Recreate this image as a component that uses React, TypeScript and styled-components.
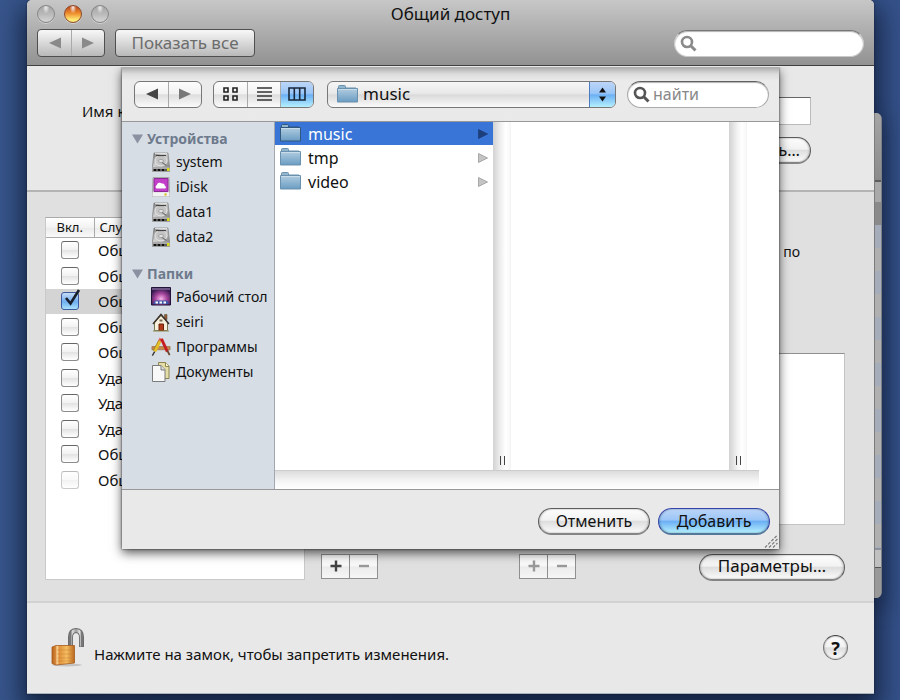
import React, { useState } from "react";
import styled, { createGlobalStyle, css } from "styled-components";

const Global = createGlobalStyle`
  * { box-sizing: border-box; }
  html, body, #root { height: 100%; }
  body {
    margin: 0;
    overflow: hidden;
    font-family: "Noto Sans", "Open Sans", sans-serif;
    font-size: 15px;
    line-height: 20px;
    color: #111;
  }
  button, input, select { font: inherit; color: inherit; margin: 0; }
  button:focus, input:focus, select:focus { outline: none; }
`;

const gloss = "linear-gradient(#fdfdfd 0%, #f2f2f2 46%, #dedede 52%, #fbfbfb 100%)";
const aqua = "linear-gradient(#bcd5f7 0%, #9bc6f7 45%, #6cb0f5 52%, #b5f0fd 100%)";

const Desktop = styled.div`
  position: relative;
  height: 100%;
  padding: 0 26px 6px 27px;
  display: flex;
  background: linear-gradient(90deg, #38568c, #2d487a 50%, #35528a);
`;

const BackWindow = styled.div`
  position: absolute;
  z-index: 1;
  right: 18px;
  top: 113px;
  width: 8px;
  height: 485px;
  display: flex;
  flex-direction: column;
  border-radius: 0 6px 6px 0;
  background: #9d9d9d;
  border-left: 1px solid #7c7c7c;
  border-right: 1px solid #7d8086;
  box-shadow: 0 8px 20px 2px rgba(5, 12, 30, 0.5);
  clip-path: inset(-20px -40px -40px 0);
`;
const BackTitle = styled.div`
  height: 69px;
  border-radius: 0 5px 0 0;
  background: linear-gradient(#a5a5a5, #8b8b8b);
  border-bottom: 2px solid #5d5d5d;
`;
const BackHeader = styled.div`
  height: 43px;
  background: linear-gradient(#a9a9a9 0 20px, #8a8a8a 20px);
`;
const BackRows = styled.div`
  flex: 1;
  background: repeating-linear-gradient(#a4adb9 0 23px, #b0b0b0 23px 46px);
`;
const BackFoot = styled.div`
  height: 50px;
  border-radius: 0 0 5px 0;
  border-top: 2px solid #8d929c;
  background: linear-gradient(#c0c0c0 0 17px, #555 17px 18px, #999 18px);
`;

const Window = styled.main`
  position: relative;
  flex: 1;
  display: flex;
  flex-direction: column;
  background: #e8e8e8;
  border-bottom: 1px solid #aab2c0;
  border-radius: 5px 5px 0 0;
  box-shadow: 0 12px 26px 6px rgba(5, 12, 30, 0.65), 0 0 2px #223;
`;

const TitleArea = styled.header`
  height: 67px;
  padding: 3px 10px 0;
  border-bottom: 1px solid #404040;
  border-radius: 5px 5px 0 0;
  background: linear-gradient(#c7c7c7, #929292);
`;
const TitleRow = styled.div`
  display: grid;
  grid-template-columns: 1fr auto 1fr;
  align-items: center;
  height: 21px;
`;
const Title = styled.h1`
  margin: 0;
  font-size: 17px;
  font-weight: 400;
  line-height: 21px;
`;
const Lights = styled.div`
  display: flex;
  gap: 9px;
`;
const Light = styled.button<{ $lit?: boolean }>`
  width: 18px;
  height: 18px;
  padding: 0;
  border-radius: 50%;
  border: 1px solid ${(p) => (p.$lit ? "#8d4a2c" : "#858585")};
  background: ${(p) =>
    p.$lit
      ? "radial-gradient(ellipse at 50% 10%, rgba(255,255,255,0.9), transparent 30%), linear-gradient(#b8431c, #ee8b2b 45%, #ffe873 85%)"
      : "radial-gradient(ellipse at 50% 10%, rgba(255,255,255,0.8), transparent 30%), linear-gradient(#a5a5a5, #b9b9b9 50%, #d6d6d6)"};
  box-shadow: 0 1px 0 rgba(255, 255, 255, 0.4);
`;
const ToolRow = styled.div`
  display: flex;
  align-items: center;
  margin-top: 5px;
  gap: 10px;
`;
const Segments = styled.div<{ $dark?: boolean }>`
  display: flex;
  height: ${(p) => (p.$dark ? 28 : 27)}px;
  flex: none;
  border: 1px solid ${(p) => (p.$dark ? "#4f4f4f" : "#777")};
  border-radius: ${(p) => (p.$dark ? 4 : 6)}px;
  overflow: hidden;
  background: ${(p) => (p.$dark ? "linear-gradient(#f8f8f8, #b9b9b9)" : gloss)};
`;
const Segment = styled.button<{ $on?: boolean; $dark?: boolean }>`
  width: 33px;
  padding: 0;
  display: flex;
  align-items: center;
  justify-content: center;
  border: 0;
  background: ${(p) => (p.$on ? aqua : "transparent")};
  & + & { border-left: 1px solid ${(p) => (p.$dark ? "#333" : "#aaa")}; }
`;
const ShowAll = styled.button`
  height: 28px;
  width: 140px;
  padding: 0;
  border: 1px solid #4f4f4f;
  border-radius: 4px;
  background: linear-gradient(#f8f8f8, #b9b9b9);
  color: #6c6c6c;
  font-size: 17px;
  line-height: 24px;
`;
const SearchBox = styled.label<{ $sheet?: boolean }>`
  display: flex;
  align-items: center;
  flex: none;
  gap: 2px;
  width: ${(p) => (p.$sheet ? 142 : 190)}px;
  height: 27px;
  padding: 0 10px 0 5px;
  border-radius: 14px;
  background: #fff;
  border: 1px solid ${(p) => (p.$sheet ? "#aaa" : "#c9c9c9")};
  border-top-color: ${(p) => (p.$sheet ? "#606060" : "#777")};
  box-shadow: inset 0 1px 1px rgba(0, 0, 0, 0.3);
  margin-left: ${(p) => (p.$sheet ? "0" : "auto")};
  input {
    flex: 1;
    min-width: 0;
    padding: 0;
    border: 0;
    background: transparent;
    font-size: 16px;
    line-height: 20px;
  }
  input::placeholder { color: #888; opacity: 1; }
`;

const NameSection = styled.section`
  height: 126px;
  padding: 31px 63px 0 55px;
  border-bottom: 2px solid #b4b4b4;
`;
const NameLine = styled.div`
  display: flex;
  gap: 8px;
  align-items: center;
  line-height: 22px;
  input {
    flex: 1;
    height: 28px;
    border: 1px solid #bbb;
    border-top-color: #666;
    background: #fff;
  }
`;
const NameActions = styled.div`
  display: flex;
  justify-content: flex-end;
  margin-top: 12px;
`;
const Pill = styled.button<{ $primary?: boolean; $wide?: boolean }>`
  height: 27px;
  width: ${(p) => (p.$wide ? 146 : 112)}px;
  padding: 0 0 1px;
  border: 1px solid #5c5c5c;
  border-bottom: 2px solid #858585;
  border-radius: 14px;
  background: ${gloss};
  box-shadow: inset 1px 0 2px rgba(0, 0, 0, 0.2), inset -1px 0 2px rgba(0, 0, 0, 0.2);
  font-size: ${(p) => (p.$wide ? 17 : 16)}px;
  line-height: 22px;
  white-space: nowrap;
  ${(p) =>
    p.$primary &&
    css`
      border-color: #3445a8;
      border-bottom-color: #55779c;
      background: ${aqua};
    `}
`;

const Services = styled.section`
  flex: 1;
  display: flex;
  gap: 16px;
  padding: 25px 29px 20px 18px;
  background: #e0e0e0;
`;
const ServiceBox = styled.div`
  width: 260px;
  height: 363px;
  flex: none;
  background: #fff;
  border: 1px solid #c9c9c9;
  border-top-color: #aaa;
`;
const ServiceTable = styled.table`
  width: 100%;
  border-collapse: collapse;
  table-layout: fixed;
  th {
    height: 20px;
    padding: 0 0 0 5px;
    font-size: 13px;
    line-height: 18px;
    font-weight: 400;
    text-align: left;
    background: linear-gradient(#fff, #f2f2f2 50%, #eaeaea 52%, #fafafa);
    border-bottom: 1px solid #aaa;
  }
  th:first-child {
    width: 48px;
    padding: 0;
    text-align: center;
    border-right: 1px solid #aaa;
  }
  td { padding: 0 0 0 4px; white-space: nowrap; overflow: hidden; }
  td:first-child { padding: 0 0 0 15px; }
`;
const ServiceRow = styled.tr<{ $selected?: boolean }>`
  height: 25px;
  &:nth-child(even) { height: 26px; }
  background: ${(p) => (p.$selected ? "#d4d4d4" : "#fff")};
`;
const Check = styled.input`
  appearance: none;
  display: block;
  width: 18px;
  height: 18px;
  border: 1px solid #8c8c8c;
  border-top-color: #666;
  border-radius: 3px;
  background: linear-gradient(#fff, #f2f2f2 48%, #e3e3e3 52%, #fff);
  &:checked {
    border-color: #3a5a9c;
    background: linear-gradient(#c7dcf5, #6eaef0 55%, #a9e2fb);
  }
  &:disabled { opacity: 0.45; }
`;
const CheckWrap = styled.label`
  position: relative;
  display: block;
  svg { position: absolute; left: 2px; top: -4px; pointer-events: none; }
`;

const Detail = styled.div`
  flex: 1;
  min-width: 0;
  display: flex;
  flex-direction: column;
`;
const Hint = styled.p`
  margin: 25px 45px 91px 0;
  text-align: right;
  font-size: 14px;
  line-height: 20px;
`;
const Lists = styled.div`
  display: grid;
  grid-template-columns: 182px 1fr;
  gap: 16px;
`;
const ListBox = styled.div`
  height: 172px;
  background: #fff;
  border: 1px solid #c4c4c4;
  border-top-color: #909090;
`;
const DetailActions = styled.div`
  display: grid;
  grid-template-columns: 182px 1fr auto;
  column-gap: 16px;
  margin-top: 29px;
`;
const PlusMinus = styled.div`
  display: flex;
  button {
    width: 29px;
    height: 25px;
    padding: 0;
    display: flex;
    align-items: center;
    justify-content: center;
    border: 1px solid #909090;
    background: linear-gradient(#fff, #f7f7f7 48%, #ececec 52%, #f6f6f6);
  }
  button + button { margin-left: -1px; }
`;

const Footer = styled.footer`
  display: flex;
  align-items: center;
  height: 93px;
  padding: 0 26px 0 24px;
  border-top: 2px solid #d2d2d2;
`;
const LockButton = styled.button`
  padding: 0;
  border: 0;
  background: none;
  width: 34px;
  height: 42px;
`;
const LockText = styled.span`
  flex: 1;
  margin: 13px 0 0 9px;
`;
const Help = styled.button`
  width: 25px;
  height: 25px;
  padding: 0;
  border-radius: 50%;
  border: 1px solid #777;
  border-top-color: #444;
  background: ${gloss};
  box-shadow: inset 0 0 2px rgba(0, 0, 0, 0.5);
  font-size: 18px;
  line-height: 20px;
  font-weight: 700;
`;

const Sheet = styled.section`
  position: absolute;
  top: 67px;
  left: 95px;
  right: 95px;
  display: flex;
  flex-direction: column;
  background: #e9e9e9;
  box-shadow: 0 4px 10px rgba(0, 0, 0, 0.65), 0 0 2px rgba(0, 0, 0, 0.7);
  clip-path: inset(0 -20px -30px -20px);
`;
const SheetBar = styled.div`
  display: flex;
  align-items: center;
  height: 55px;
  padding: 0 10px 0 12px;
  gap: 11px;
  border-bottom: 1px solid #989898;
  background: linear-gradient(#a9a9a9, #dcdcdc 7px, #ebebeb 14px, #e9e9e9);
`;
const PathPicker = styled.div`
  flex: 1;
  min-width: 0;
  height: 27px;
  margin-left: 2px;
  display: flex;
  align-items: center;
  padding-left: 9px;
  border: 1px solid #777;
  border-radius: 6px;
  overflow: hidden;
  background: linear-gradient(#f6f6f6, #e9e9e9 45%, #dadada 52%, #fafafa);
  select {
    flex: 1;
    min-width: 0;
    height: 25px;
    padding: 0 5px;
    border: 0;
    appearance: none;
    background: transparent;
    font-size: 17px;
    line-height: 22px;
  }
`;
const Stepper = styled.span`
  width: 26px;
  height: 25px;
  display: flex;
  align-items: center;
  justify-content: center;
  background: ${aqua};
  border-left: 1px solid #4c7cc0;
`;
const Browser = styled.div`
  display: flex;
  height: 368px;
  border-bottom: 1px solid #989898;
`;
const Sidebar = styled.nav`
  width: 153px;
  flex: none;
  padding-top: 7px;
  background: #d6dde5;
  border-right: 1px solid #a3a8ae;
`;
const Group = styled.div`
  & + & { margin-top: 15px; }
`;
const GroupTitle = styled.h2`
  display: flex;
  align-items: center;
  gap: 4px;
  margin: 0;
  height: 20px;
  padding-left: 10px;
  font-size: 14px;
  line-height: 20px;
  font-weight: 700;
  color: #6d7a8c;
`;
const Place = styled.a`
  display: flex;
  align-items: center;
  gap: 5px;
  height: 25px;
  padding-left: 29px;
  font-size: 14px;
  line-height: 20px;
  white-space: nowrap;
  color: #111;
  text-decoration: none;
  svg { flex: none; }
`;
const ColumnArea = styled.div`
  flex: 1;
  min-width: 0;
  display: flex;
  flex-direction: column;
  background: #fff;
`;
const Columns = styled.div`
  flex: 1;
  display: flex;
  min-height: 0;
`;
const Column = styled.div`
  flex: 0 1 218px;
  min-width: 0;
`;
const Entry = styled.button<{ $selected?: boolean }>`
  display: flex;
  align-items: center;
  gap: 7px;
  width: 100%;
  height: 23px;
  margin-bottom: 1px;
  padding: 0 5px;
  border: 0;
  text-align: left;
  font-size: 16px;
  line-height: 22px;
  background: ${(p) => (p.$selected ? "#3875d7" : "transparent")};
  color: ${(p) => (p.$selected ? "#fff" : "#111")};
  span { flex: 1; }
`;
const Divider = styled.div`
  width: 18px;
  flex: none;
  display: flex;
  align-items: flex-end;
  justify-content: center;
  gap: 3px;
  padding: 0 0 5px 1px;
  border-right: 1px solid #f4f4f4;
  background: linear-gradient(90deg, #d2d2d2, #f0f0f0 45%, #fff 75%, #f8f8f8);
  &::before, &::after {
    content: "";
    width: 1px;
    height: 9px;
    background: #444;
  }
`;
const HScroll = styled.div`
  height: 19px;
  margin-right: 20px;
  border-top: 1px solid #ccc;
  background: linear-gradient(#dcdcdc, #f7f7f7 60%, #fff);
`;
const SheetFoot = styled.div`
  position: relative;
  display: flex;
  justify-content: flex-end;
  gap: 8px;
  height: 59px;
  padding: 18px 9px 0;
`;
const Grip = styled.svg`
  position: absolute;
  right: 1px;
  bottom: 1px;
`;

const Arrow = ({ dir, color }: { dir: "l" | "r"; color: string }) => (
  <svg width="12" height="12" viewBox="0 0 12 12">
    <path d={dir === "l" ? "M12 0.5v11L0 6z" : "M0 0.5v11L12 6z"} fill={color} />
  </svg>
);

const Magnifier = ({ color }: { color: string }) => (
  <svg width="18" height="18" viewBox="0 0 18 18" fill="none" stroke={color}>
    <circle cx="7" cy="8" r="5" strokeWidth="2.6" />
    <path d="M10.5 11.5L15.500 16.500" strokeWidth="3" />
  </svg>
);

const Folder = ({ selected }: { selected?: boolean }) => (
  <svg width="21" height="19" viewBox="0 0 21 19">
    <defs>
      <linearGradient id="folder" x1="0" y1="0" x2="0" y2="1">
        <stop offset="0" stopColor="#b2cde0" />
        <stop offset="1" stopColor="#6a9cc2" />
      </linearGradient>
    </defs>
    <path d="M1.5 4V1.5q0-1 1-1h5q1 0 1 1V3H19v3H1z" fill="#93b6cf" stroke={selected ? "#31577f" : "#6a91ae"} />
    <path d="M0.5 3.5h20v13.5h-20z" fill="url(#folder)" stroke={selected ? "#31577f" : "#6a91ae"} />
    <path d="M1 4.5h19" stroke="#c8dcea" />
  </svg>
);

const Disk = () => (
  <svg width="20" height="20" viewBox="0 0 20 20">
    <defs>
      <linearGradient id="disk" x1="0" y1="0" x2="1" y2="1">
        <stop offset="0" stopColor="#6c6c6c" />
        <stop offset="0.4" stopColor="#d0d0d0" />
        <stop offset="1" stopColor="#777" />
      </linearGradient>
    </defs>
    <path d="M3 1h14l1.500 13v5.500h-17V14z" fill="url(#disk)" stroke="#808080" strokeWidth="0.700" />
    <ellipse cx="10" cy="8.500" rx="6" ry="5.500" fill="#c4c4c4" stroke="#e8e8e8" />
    <path d="M5 3.500h10" stroke="#444" strokeWidth="1.200" />
    <path d="M4 1.700h12" stroke="#eee" />
    <ellipse cx="10" cy="9" rx="2.500" ry="1.500" fill="#e9e9e9" stroke="#8d8d8d" strokeWidth="0.700" />
    <path d="M11 10.500l4.500 3" stroke="#777" strokeWidth="1.200" />
    <path d="M1.500 15h17v4.500h-17z" fill="#a8a8a8" />
    <path d="M2.500 18h13" stroke="#111" strokeWidth="2" strokeDasharray="3 1" />
    <path d="M16 16h2.500v3H16z" fill="#d8d820" />
  </svg>
);

const IDisk = () => (
  <svg width="20" height="20" viewBox="0 0 20 20">
    <path d="M2 0.5h16l0.500 15v4h-17v-4z" fill="#ddd" stroke="#999" strokeWidth="0.800" />
    <path d="M3 1.500h14v13H3z" fill="#c23ec8" stroke="#8c2a96" />
    <path d="M5.500 11.500a2 2 0 01.3-3.500 3 3 0 015-1.500a2.500 2.500 0 013 2.200 1.600 1.600 0 01.5 2.800z" fill="#fff" />
    <path d="M1.500 15.500h17v4h-17z" fill="#f3f3f3" />
    <circle cx="14.500" cy="17.500" r="1.200" fill="#d8c12a" />
  </svg>
);

const DesktopIcon = () => (
  <svg width="20" height="19" viewBox="0 0 20 19">
    <defs>
      <radialGradient id="aurora" cx="0.5" cy="0.650" r="0.600">
        <stop offset="0" stopColor="#f6b5e8" />
        <stop offset="0.500" stopColor="#a8479f" />
        <stop offset="1" stopColor="#371a50" />
      </radialGradient>
    </defs>
    <path d="M0.500 0.500h19v17.500h-19z" fill="url(#aurora)" stroke="#22143a" />
    <path d="M1 2h18" stroke="#6d5585" strokeWidth="2" />
    <path d="M2 17l2-3.500h12l2 3.500z" fill="#3e57a8" />
    <path d="M4.500 15.500h2.500m1.500 0h2.500m1.500 0h2.500" stroke="#fff" strokeWidth="2" />
  </svg>
);

const Home = () => (
  <svg width="20" height="20" viewBox="0 0 20 20">
    <path d="M13.500 2.500h2.500v5h-2.500z" fill="#9c5a37" stroke="#442" strokeWidth="0.500" />
    <path d="M3.500 10L10 3.500l6.500 6.500v8.500h-13z" fill="#f7f0dd" stroke="#775" />
    <path d="M2 12L10 2.500l8 9.500" fill="none" stroke="#3c332c" strokeWidth="1.600" />
    <path d="M8 12h4.500v6.500H8z" fill="#b13a18" stroke="#6c2109" />
    <path d="M8.500 7.500h3v2h-3z" fill="#786b55" />
    <path d="M2 19h16" stroke="#8a8a50" />
  </svg>
);

const Apps = () => (
  <svg width="20" height="20" viewBox="0 0 22 20">
    <path d="M1 9.500h20v3.500H1z" fill="#c78b50" stroke="#8a5a2c" strokeWidth="0.600" />
    <path d="M10 3L4 15" stroke="#e4bf28" strokeWidth="3.600" />
    <path d="M8.500 2.500L2.500 14" stroke="#8c6a10" strokeWidth="0.700" />
    <path d="M4 15l-2.500 4.500" stroke="#333" strokeWidth="1.500" />
    <path d="M9.500 3.500l1.500-3" stroke="#e06a5e" strokeWidth="3.600" />
    <path d="M11.500 1l6.500 14" stroke="#c51e22" strokeWidth="3.200" />
    <path d="M18 14l2.500 5" stroke="#6b4630" strokeWidth="2" />
  </svg>
);

const Docs = () => (
  <svg width="20" height="20" viewBox="0 0 20 20">
    <path d="M7.500 0.500h7l3.500 3.500v12.500H7.500z" fill="#e4dda6" stroke="#8c8551" />
    <path d="M14.500 0.500v4H18" fill="#fffbd8" stroke="#8c8551" />
    <path d="M1.500 3.500h8.500l4 4v12h-12.500z" fill="#f8f8f8" stroke="#7b7b7b" />
    <path d="M10 3.500v4.500h4" fill="#ddd" stroke="#7b7b7b" />
  </svg>
);

const Lock = () => (
  <svg width="34" height="42" viewBox="0 0 34 42">
    <defs>
      <linearGradient id="brass" x1="0" y1="0" x2="1" y2="0">
        <stop offset="0" stopColor="#b8631c" />
        <stop offset="0.180" stopColor="#d88a3c" />
        <stop offset="0.220" stopColor="#ffe0a8" />
        <stop offset="0.320" stopColor="#df913a" />
        <stop offset="0.650" stopColor="#f4bd60" />
        <stop offset="1" stopColor="#b9681e" />
      </linearGradient>
      <linearGradient id="steel" x1="0" y1="0" x2="1" y2="0">
        <stop offset="0" stopColor="#777" />
        <stop offset="0.200" stopColor="#ddd" />
        <stop offset="0.500" stopColor="#999" />
        <stop offset="0.850" stopColor="#e6e6e6" />
        <stop offset="1" stopColor="#777" />
      </linearGradient>
    </defs>
    <ellipse cx="16" cy="38" rx="15" ry="1.500" fill="#c4c4c4" />
    <path d="M19.500 21V10q0-6 5.500-6.500Q30.500 4 30.500 10v10" fill="none" stroke="#6a6a6a" strokeWidth="5" />
    <path d="M19.500 21V10q0-6 5.500-6.500Q30.500 4 30.500 10v9.500" fill="none" stroke="url(#steel)" strokeWidth="3.200" />
    <path d="M1 20l4-1.500h18.500v17.500L5 38l-4-1.500z" fill="url(#brass)" stroke="#a65a20" strokeWidth="0.800" />
    <path d="M6 23h17M6 27h17M6 31h17M6 34h17" stroke="#c87a30" strokeWidth="0.800" opacity="0.500" />
  </svg>
);

const Sign = ({ plus, color }: { plus?: boolean; color: string }) => (
  <svg width="12" height="12" viewBox="0 0 12 12">
    <path d={plus ? "M0.500 6h11M6 0.500v11" : "M1 6h10"} stroke={color} strokeWidth="2.400" />
  </svg>
);

const services = ["Общий", "Общий", "Общий", "Общий", "Общий", "Удаленный", "Удаленный", "Удаленный", "Общий", "Общий"];
const folders = ["music", "tmp", "video"];
const groups = [
  { title: "Устройства", items: [["system", Disk], ["iDisk", IDisk], ["data1", Disk], ["data2", Disk]] },
  { title: "Папки", items: [["Рабочий стол", DesktopIcon], ["seiri", Home], ["Программы", Apps], ["Документы", Docs]] },
] as { title: string; items: [string, React.ComponentType][] }[];

export default function App() {
  const [checked, setChecked] = useState<number[]>([2]);
  const [folder, setFolder] = useState("music");
  const toggle = (i: number) =>
    setChecked((c) => (c.includes(i) ? c.filter((n) => n !== i) : [...c, i]));

  return (
    <>
      <Global />
      <Desktop>
        <BackWindow>
          <BackTitle />
          <BackHeader />
          <BackRows />
          <BackFoot />
        </BackWindow>
        <Window>
          <TitleArea>
            <TitleRow>
              <Lights>
                <Light aria-label="Закрыть" />
                <Light $lit aria-label="Свернуть" />
                <Light aria-label="Увеличить" />
              </Lights>
              <Title>Общий доступ</Title>
            </TitleRow>
            <ToolRow>
              <Segments $dark>
                <Segment $dark aria-label="Назад"><Arrow dir="l" color="#8a8a8a" /></Segment>
                <Segment $dark aria-label="Вперед"><Arrow dir="r" color="#8a8a8a" /></Segment>
              </Segments>
              <ShowAll>Показать все</ShowAll>
              <SearchBox>
                <Magnifier color="#8a8a8a" />
                <input type="search" aria-label="Поиск" />
              </SearchBox>
            </ToolRow>
          </TitleArea>

          <NameSection>
            <NameLine>
              <label htmlFor="host">Имя компьютера:</label>
              <input id="host" />
            </NameLine>
            <NameActions><Pill>Изменить…</Pill></NameActions>
          </NameSection>

          <Services>
            <ServiceBox>
              <ServiceTable>
                <thead>
                  <tr><th>Вкл.</th><th>Служба</th></tr>
                </thead>
                <tbody>
                  {services.map((name, i) => (
                    <ServiceRow key={i} $selected={i === 2}>
                      <td>
                        <CheckWrap>
                          <Check
                            type="checkbox"
                            aria-label={name}
                            checked={checked.includes(i)}
                            disabled={i === 9}
                            onChange={() => toggle(i)}
                          />
                          {checked.includes(i) && (
                            <svg width="18" height="20" viewBox="0 0 18 20">
                              <path d="M3 10l4.500 5.500L16 2" fill="none" stroke="#1a1f2c" strokeWidth="2.600" />
                            </svg>
                          )}
                        </CheckWrap>
                      </td>
                      <td>{name}</td>
                    </ServiceRow>
                  ))}
                </tbody>
              </ServiceTable>
            </ServiceBox>
            <Detail>
              <Hint>по</Hint>
              <Lists>
                <ListBox />
                <ListBox />
              </Lists>
              <DetailActions>
                <PlusMinus>
                  <button aria-label="Добавить папку"><Sign plus color="#444" /></button>
                  <button aria-label="Удалить папку"><Sign color="#999" /></button>
                </PlusMinus>
                <PlusMinus>
                  <button aria-label="Добавить пользователя"><Sign plus color="#999" /></button>
                  <button aria-label="Удалить пользователя"><Sign color="#999" /></button>
                </PlusMinus>
                <Pill $wide>Параметры…</Pill>
              </DetailActions>
            </Detail>
          </Services>

          <Footer>
            <LockButton aria-label="Замок"><Lock /></LockButton>
            <LockText>Нажмите на замок, чтобы запретить изменения.</LockText>
            <Help>?</Help>
          </Footer>

          <Sheet role="dialog" aria-label="Выбор папки">
            <SheetBar>
              <Segments>
                <Segment aria-label="Назад"><Arrow dir="l" color="#444" /></Segment>
                <Segment aria-label="Вперед"><Arrow dir="r" color="#777" /></Segment>
              </Segments>
              <Segments>
                <Segment aria-label="Значки">
                  <svg width="16" height="14" viewBox="0 0 16 14" fill="none" stroke="#222" strokeWidth="1.600">
                    <path d="M1 1h4v4H1zM10 1h4v4h-4zM1 9h4v4H1zM10 9h4v4h-4z" />
                  </svg>
                </Segment>
                <Segment aria-label="Список">
                  <svg width="15" height="14" viewBox="0 0 15 14" stroke="#333" strokeWidth="1.500">
                    <path d="M0 1h15M0 5h15M0 9h15M0 13h15" />
                  </svg>
                </Segment>
                <Segment $on aria-label="Колонки">
                  <svg width="18" height="14" viewBox="0 0 18 14" fill="none" stroke="#18273a" strokeWidth="1.600">
                    <path d="M1 1h16v12H1zM6.300 1v12M11.700 1v12" />
                  </svg>
                </Segment>
              </Segments>
              <PathPicker>
                <Folder />
                <select aria-label="Папка" value={folder} onChange={(e) => setFolder(e.target.value)}>
                  {folders.map((f) => <option key={f}>{f}</option>)}
                </select>
                <Stepper>
                  <svg width="9" height="17" viewBox="0 0 9 17" fill="#111">
                    <path d="M4.500 1.500L8 6.500h-7zM1 10.500h7L4.500 15.500z" />
                  </svg>
                </Stepper>
              </PathPicker>
              <SearchBox $sheet>
                <Magnifier color="#555" />
                <input type="search" placeholder="найти" aria-label="найти" />
              </SearchBox>
            </SheetBar>
            <Browser>
              <Sidebar>
                {groups.map((g) => (
                  <Group key={g.title}>
                    <GroupTitle>
                      <svg width="11" height="10" viewBox="0 0 11 10"><path d="M0 0.500h11L5.500 9.500z" fill="#8b91a0" /></svg>
                      {g.title}
                    </GroupTitle>
                    {g.items.map(([name, Icon]) => (
                      <Place key={name} href="#"><Icon />{name}</Place>
                    ))}
                  </Group>
                ))}
              </Sidebar>
              <ColumnArea>
                <Columns>
                  <Column>
                    {folders.map((f) => (
                      <Entry key={f} $selected={f === folder} onClick={() => setFolder(f)}>
                        <Folder selected={f === folder} />
                        <span>{f}</span>
                        <svg width="10" height="10" viewBox="0 0 10 10">
                          <path
                            d="M0.500 0.500v9L9.500 5z"
                            fill={f === folder ? "#1c3f7c" : "#c4c4c4"}
                            stroke={f === folder ? "#1c3f7c" : "#999"}
                            strokeWidth="0.800"
                          />
                        </svg>
                      </Entry>
                    ))}
                  </Column>
                  <Divider />
                  <Column />
                  <Divider />
                </Columns>
                <HScroll />
              </ColumnArea>
            </Browser>
            <SheetFoot>
              <Pill>Отменить</Pill>
              <Pill $primary>Добавить</Pill>
              <Grip width="14" height="14" viewBox="0 0 14 14" stroke="#777" strokeWidth="1.200" strokeDasharray="3 1.500">
                <path d="M1 13.500L13.500 1M5 13.500L13.500 5M9 13.500L13.500 9" />
              </Grip>
            </SheetFoot>
          </Sheet>
        </Window>
      </Desktop>
    </>
  );
}
